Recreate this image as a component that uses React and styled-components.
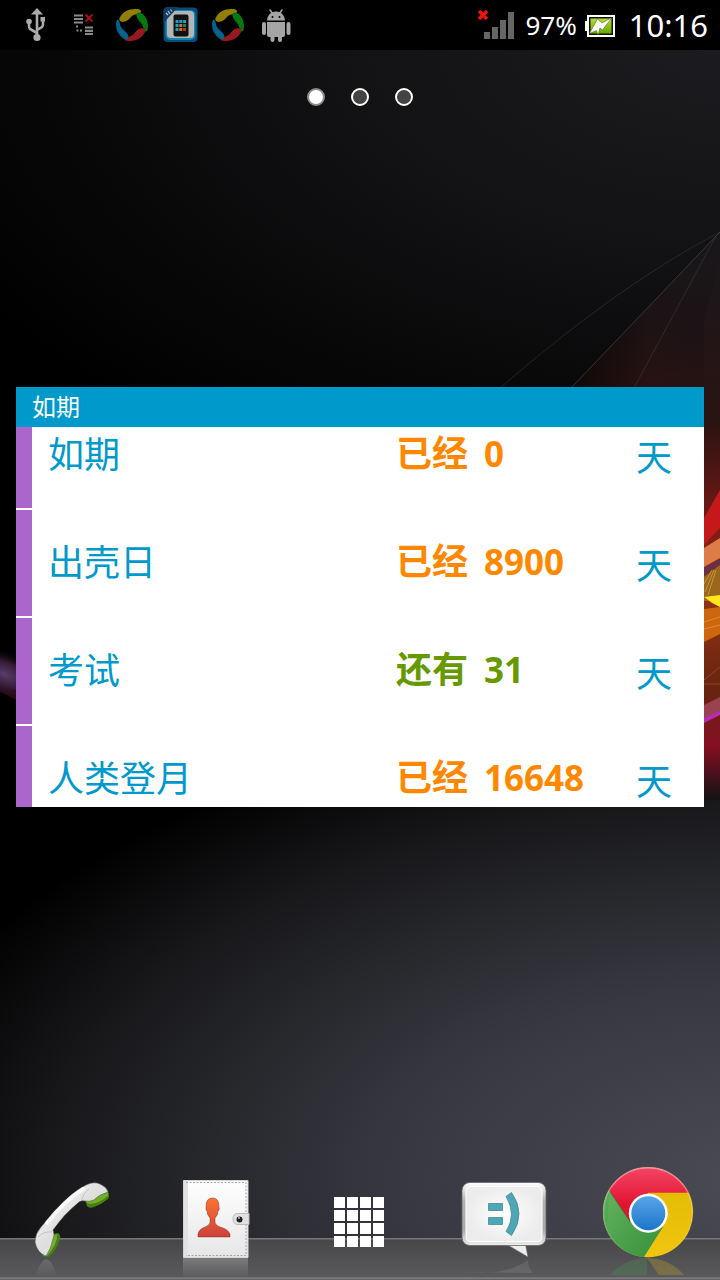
import React from "react";
import styled, { createGlobalStyle } from "styled-components";

const GlobalStyle = createGlobalStyle`
  *, *::before, *::after { box-sizing: border-box; }
  body {
    margin: 0;
    background: #000;
    font-family: "Noto Sans", "Noto Sans CJK SC", sans-serif;
  }
`;

const Screen = styled.div`
  position: relative;
  isolation: isolate;
  display: flex;
  flex-direction: column;
  min-height: 100vh;
  overflow: hidden;
`;

const Wallpaper = styled.svg`
  position: absolute;
  inset: 0;
  z-index: -1;
  width: 100%;
  height: 100%;
`;

const StatusBar = styled.header`
  display: flex;
  align-items: center;
  justify-content: space-between;
  height: 50px;
  padding: 0 12px 0 20px;
  background: #000;
  color: #fff;
`;

const Notifications = styled.div`
  display: flex;
  gap: 16px;
`;

const StatusIcon = styled.svg`
  display: block;
  width: ${({ $width }) => $width || 32}px;
  height: 40px;
  overflow: visible;
`;

const SystemStatus = styled.div`
  display: flex;
  align-items: center;
`;

const BatteryLevel = styled.span`
  padding: 0 8px 0 10px;
  font-size: 26px;
  line-height: 50px;
`;

const Clock = styled.time`
  padding-left: 14px;
  font-size: 31px;
  line-height: 50px;
`;

const Pager = styled.nav`
  display: flex;
  justify-content: center;
  gap: 26px;
  padding-top: 38px;
`;

const PageDot = styled.button`
  width: 18px;
  height: 18px;
  padding: 0;
  border: 2px solid ${({ $active }) => ($active ? "#8c8c8c" : "#fff")};
  border-radius: 50%;
  background: ${({ $active }) => ($active ? "#fff" : "#444")};
`;

const Widget = styled.section`
  margin: 281px 16px 40px;
`;

const WidgetTitle = styled.h1`
  margin: 0;
  padding: 0 16px;
  background: #0099cc;
  color: #fff;
  font-size: 24px;
  font-weight: 400;
  line-height: 40px;
`;

const EventList = styled.ul`
  display: flex;
  flex-direction: column;
  justify-content: center;
  gap: 2px;
  height: 380px;
  margin: 0;
  padding: 0;
  overflow: hidden;
  background: #fff;
  list-style: none;
`;

const EventRow = styled.li`
  display: grid;
  flex: none;
  grid-template-columns: 1fr 240px 36px;
  align-items: center;
  height: 106px;
  padding: 0 32px 0 16px;
  border-left: 16px solid #aa66cc;
  color: #0099cc;
  font-size: 36px;
  line-height: 52px;
`;

const EventName = styled.span`
  padding-bottom: 6px;
  font-family: "Noto Sans CJK SC", sans-serif;
`;

const Countdown = styled.span`
  display: flex;
  gap: 16px;
  padding-bottom: 2px;
  color: ${({ $upcoming }) => ($upcoming ? "#669900" : "#ff8800")};
  font-weight: 700;
`;

const Days = styled.span`
  font-size: 35px;
`;

const Unit = styled(EventName)`
  padding-bottom: 0;
`;

const Dock = styled.nav`
  display: grid;
  grid-template-columns: repeat(5, 1fr);
  margin-top: auto;
  background: linear-gradient(
    transparent 78px,
    #77777b 78px,
    #77777b 79px,
    #47474a 80px,
    #5a5a5c 117px,
    #88888a 118px,
    #555557 120px
  );
`;

const DockButton = styled.button`
  display: flex;
  justify-content: center;
  padding: 0;
  border: 0;
  background: none;
`;

const DockIcon = styled.svg`
  display: block;
  width: 144px;
  height: 120px;
`;

const UsbIcon = () => (
  <StatusIcon viewBox="0 0 32 40" aria-label="USB">
    <g fill="none" stroke="#aaa" strokeWidth="2.6">
      <path d="M17 8V34M17 28l-7-4q-1-1-1-3v-5M17 25l5-3q1-1 1-3v-4" />
    </g>
    <g fill="#aaa">
      <path d="M17 3l6 6.500H11z" />
      <circle cx="17" cy="32.500" r="3.600" />
      <circle cx="9" cy="16.500" r="2.800" />
      <path d="M20.500 12h4.500v4.500h-4.500z" />
    </g>
  </StatusIcon>
);

const DataIcon = () => (
  <StatusIcon viewBox="0 0 32 40" aria-label="No data">
    <path d="M6 10.500h9M6 14h9M6 17.500h9M17 22.500h8M17 25.800h8M17 29h8" stroke="#8a8a8a" strokeWidth="2.200" />
    <path d="M8 20.500h2v2H8zM8.500 24.500h2v2h-2zM12 24.500h2v2h-2z" fill="#8a8a8a" />
    <path d="M17.500 9.500l7 7M24.500 9.500l-7 7" stroke="#ad1010" strokeWidth="1.800" />
  </StatusIcon>
);

const SwirlIcon = () => (
  <StatusIcon viewBox="0 0 32 40" aria-label="Sync">
    <path fill="#927f00" d="M3.500 13C7 6 14 3 23 4.300c2 .8 2.600 2 1.500 3.500-2 2-4.500 1-7 2.200-3 1.500-4.500 5.500-8.500 6.500-3 .8-6.500.2-5.500-3.500z" />
    <path fill="#04790d" d="M20.500 11c-.8-3.500 2.500-4.500 5.500-2.500 5 4 7 10 5.500 16.500-.6 2.400-2.600 1.600-3.500-.5-1-2.200-.8-4-3-6.500-1.800-2.200-3.900-4-4.500-7z" />
    <path fill="#96191d" d="M29 27c-3.500 7-10.500 10-18.500 8.700-2.500-.6-2.700-2.200-.8-3 3-1.300 5-.7 7.500-3.200 2.200-2.200 3.800-5.300 7.300-6 3.500-.6 6.300.4 4.500 3.500z" />
    <path fill="#05608c" d="M.5 15.500c1-1.500 2.500-.5 3 1.500.7 2.700.4 4 2.700 6.500 2.500 2.700 6.300 5 6.300 8.500-.2 3-3.300 3.200-6 .8C1 28 -1 22 .5 15.500z" />
  </StatusIcon>
);

const PhoneAppIcon = () => (
  <StatusIcon viewBox="0 0 32 40" aria-label="Phone app">
    <rect x="-.5" y="2.500" width="34" height="34.500" rx="4" fill="#064c76" />
    <rect x="1.500" y="5" width="30" height="30" rx="5" fill="#1387ae" />
    <rect x="3" y="6" width="27" height="27" rx="4" fill="#b4b4b4" />
    <path d="M-.5 18V6q0-4 4-4H14z" fill="#0d3f65" />
    <path d="M2 8l2 2M4 6l2 3M6.500 4.500l1.500 2" stroke="#bcc7ce" strokeWidth="1.200" />
    <rect x="9.500" y="9.500" width="15" height="22" rx="2" fill="#111" />
    <path fill="#1ba0cc" d="M11.500 15h3v3h-3zM15.300 15h3v3h-3zM19.100 15h3v3h-3zM11.500 19h3v3h-3zM11.500 23h3v3h-3z" />
    <path fill="#c8780f" d="M15.300 19h3v3h-3zM15.300 23h3v3h-3z" />
    <path fill="#168a45" d="M19.100 19h3v3h-3z" />
    <path fill="#b8331a" d="M19.100 23h3v3h-3z" />
  </StatusIcon>
);

const AndroidIcon = () => (
  <StatusIcon viewBox="0 0 32 40" aria-label="Android">
    <g fill="#a5a5a5">
      <path d="M7 15.500C7.500 10 11 6.500 16 6.500s8.500 3.500 9 9zM7 17h18v13q0 2-2 2H9q-2 0-2-2z" />
      <rect x="2" y="17" width="4" height="13" rx="2" />
      <rect x="26.500" y="17" width="4" height="13" rx="2" />
      <rect x="10.500" y="28" width="4" height="9" rx="2" />
      <rect x="18" y="28" width="4" height="9" rx="2" />
    </g>
    <path d="M10 5l3 4M22 5l-3 4" stroke="#a5a5a5" strokeWidth="1.500" strokeLinecap="round" />
    <circle cx="12.500" cy="12" r="1" />
    <circle cx="19.500" cy="12" r="1" />
  </StatusIcon>
);

const SignalIcon = () => (
  <StatusIcon viewBox="0 0 38 40" $width={38} aria-label="No signal">
    <path d="M7 27h6v7H7zM15 22h6v12h-6zM23 15h6v19h-6zM31 7h6v27h-6z" fill="#666" />
    <path d="M2 6l8 8M10 6l-8 8" stroke="#f01111" strokeWidth="3.500" />
  </StatusIcon>
);

const BatteryIcon = () => (
  <StatusIcon viewBox="0 0 30 40" $width={30} aria-label="Charging">
    <defs>
      <linearGradient id="charge" x2="0" y2="1">
        <stop stopColor="#b5dd32" />
        <stop offset="1" stopColor="#69a800" />
      </linearGradient>
    </defs>
    <path d="M0 16h3v10H0z" fill="#fff" />
    <rect x="3" y="11" width="26" height="20" fill="#111" stroke="#fff" strokeWidth="2" />
    <path d="M5.500 13.500h21v15h-21z" fill="url(#charge)" />
    <path d="M27 12.500L17.500 25l-2.500-2-2 7-1.500-4.500L4.500 28.500 12.500 14l4.500 4z" fill="#fff" stroke="#3c5c0c" strokeWidth=".5" />
  </StatusIcon>
);

const Call = () => (
  <DockIcon viewBox="0 0 144 120" aria-hidden="true">
    <defs>
      <linearGradient id="handset" x1="0" y1="0" x2="1" y2="1">
        <stop stopColor="#fff" />
        <stop offset=".5" stopColor="#dedede" />
        <stop offset="1" stopColor="#fafafa" />
      </linearGradient>
      <linearGradient id="callShine" x2="0" y2="1">
        <stop stopColor="#aaa" stopOpacity=".3" />
        <stop offset="1" stopColor="#aaa" stopOpacity="0" />
      </linearGradient>
    </defs>
    <path d="M46 99q8 2 10 18H36q2-14 10-18z" fill="url(#callShine)" />
    <path d="M85 40l2 6q2 3 7 1 8-3 14-8 2-3 0-8zM53 74l5-1q3 2 2 6-3 10-10 17-3 2-7 0z" fill="#477f12" />
    <path d="M86 41l22-9 0 4q-8 7-18 8-3 0-4-3zM53 76l4-2q1 10-10 22l-4 0z" fill="#6fae25" />
    <path d="M35 82q0-8 6-15 12-15 27-29 10-9 18-13 8-4 14-1 7 3 8 8-10 3-14 8-5 2-9 1-3-1-6 1-15 12-26 28 2 5 0 9-2 10-7 17-9-3-11-14z" fill="url(#handset)" stroke="#555" strokeWidth=".6" />
    <path d="M83 29Q65 40 47 63" fill="none" stroke="#fff" strokeWidth="4" strokeLinecap="round" opacity=".85" />
    <path d="M82 40q2-8 7-11M52 72q-8-1-14 5" fill="none" stroke="#c4c4c4" />
  </DockIcon>
);

const Contacts = () => (
  <DockIcon viewBox="0 0 144 120" aria-hidden="true">
    <defs>
      <linearGradient id="cover" x2="0" y2="1">
        <stop stopColor="#fff" />
        <stop offset="1" stopColor="#e6e6e7" />
      </linearGradient>
      <linearGradient id="person" x2="0" y2="1">
        <stop stopColor="#fb7430" />
        <stop offset="1" stopColor="#ce403a" />
      </linearGradient>
      <linearGradient id="coverShine" x2="0" y2="1">
        <stop stopColor="#bbb" stopOpacity=".4" />
        <stop offset="1" stopColor="#bbb" stopOpacity="0" />
      </linearGradient>
    </defs>
    <path d="M39 98h65v20H39z" fill="url(#coverShine)" />
    <path d="M39.500 20.500h64.500v77h-64.500z" fill="url(#cover)" stroke="#d4d4d6" />
    <path d="M40 21h4v76h-4z" fill="#e2e2e4" />
    <path d="M42 22.500h60v73H42" fill="none" stroke="#a5a5a5" strokeDasharray="2 1.500" />
    <path d="M54 77v-3q1-5 7-7 5-2 5-5v-4q-3-3-3-7-1.500-1-1-4-.3-9 6.500-9t6.500 9q1 3-1 4 0 4-3 7v4q0 3 5 5 8 2 10 7v3z" fill="url(#person)" stroke="#6d1e12" strokeOpacity=".5" strokeWidth=".8" />
    <path d="M105 53.500H94q-5 0-5 5.500t5 5.500h11z" fill="#e1e1e1" stroke="#bbb" />
    <circle cx="95.500" cy="59.500" r="3" fill="#222" />
    <circle cx="95" cy="58" r="1" fill="#bbb" />
  </DockIcon>
);

const Apps = () => (
  <DockIcon viewBox="0 0 144 120" aria-hidden="true">
    {[0, 1, 2, 3].map((row) =>
      [0, 1, 2, 3].map((col) => (
        <rect key={`${row}${col}`} x={46 + col * 13} y={37 + row * 13} width="11" height="11" fill="#fff" />
      ))
    )}
  </DockIcon>
);

const Messaging = () => (
  <DockIcon viewBox="0 0 144 120" aria-hidden="true">
    <defs>
      <linearGradient id="bubbleEdge" x2="0" y2="1">
        <stop stopColor="#fff" />
        <stop offset=".3" stopColor="#b2b2b2" />
        <stop offset=".75" stopColor="#aaa" />
        <stop offset="1" stopColor="#eee" />
      </linearGradient>
      <radialGradient id="bubble">
        <stop stopColor="#fff" />
        <stop offset="1" stopColor="#ececec" />
      </radialGradient>
    </defs>
    <path d="M34 112q40 4 62-12 0 8 5 13z" fill="#aaa" opacity=".18" />
    <path d="M74 84l22 13-3-15z" fill="#eee" stroke="#666" strokeWidth=".6" />
    <rect x="30" y="22.500" width="84" height="63" rx="8" fill="url(#bubbleEdge)" stroke="#66666a" strokeWidth=".8" />
    <rect x="34" y="26.500" width="76" height="55" rx="4" fill="url(#bubble)" stroke="#fff" />
    <path d="M56.500 43.500h14v7h-14zM56.500 57.500h14v7h-14z" fill="#4fa6b7" stroke="#37818f" strokeWidth=".7" />
    <path d="M74 36.500l5.500-4q15 21 0 43l-5.500-4q11-17 0-35z" fill="#4fa6b7" stroke="#37818f" strokeWidth=".7" />
  </DockIcon>
);

const Chrome = () => (
  <DockIcon viewBox="0 0 144 120" aria-hidden="true">
    <defs>
      <linearGradient id="chromeRed" x2="0" y2="1">
        <stop stopColor="#f6486a" />
        <stop offset=".7" stopColor="#e01430" />
      </linearGradient>
      <linearGradient id="chromeGreen" x2="1" y2="1">
        <stop stopColor="#63b260" />
        <stop offset="1" stopColor="#359038" />
      </linearGradient>
      <linearGradient id="chromeYellow" x2="0" y2="1">
        <stop stopColor="#dfb800" />
        <stop offset="1" stopColor="#f2c711" />
      </linearGradient>
      <linearGradient id="chromeBlue" x2="0" y2="1">
        <stop stopColor="#58a5e8" />
        <stop offset="1" stopColor="#1c75c9" />
      </linearGradient>
      <linearGradient id="chromeShine" x2="0" y2="1">
        <stop stopColor="#fff" stopOpacity=".4" />
        <stop offset="1" stopColor="#fff" stopOpacity="0" />
      </linearGradient>
      <clipPath id="chromeDisc">
        <circle cx="72" cy="52.300" r="45" />
      </clipPath>
    </defs>
    <path d="M34 115q16-17 37-17v17z" fill="#4d8b50" opacity=".35" />
    <path d="M71 98q22 0 37 17H83z" fill="#b69c2b" opacity=".35" />
    <g clipPath="url(#chromeDisc)">
      <path d="M20 0h110v110H20z" fill="url(#chromeYellow)" />
      <path d="M20 9l13.300 21.700L67 98v12H20z" fill="url(#chromeGreen)" />
      <path d="M33.300 30.700L53.500 61 87 67 67 98.500 30 90z" fill="url(#chromeGreen)" />
      <path d="M20 9V5h100v27.700H72L54 62 33.300 30.700z" fill="url(#chromeRed)" />
      <path d="M33.300 30.700L54 61.500" stroke="#2c7433" strokeWidth=".7" />
    </g>
    <circle cx="72" cy="52.300" r="44.500" fill="none" stroke="url(#chromeShine)" strokeWidth="1.500" />
    <circle cx="72.300" cy="53.300" r="19.500" fill="#fff" />
    <circle cx="72.300" cy="53.300" r="17" fill="url(#chromeBlue)" />
  </DockIcon>
);

const Backdrop = () => (
  <Wallpaper viewBox="0 0 720 1280" preserveAspectRatio="none" aria-hidden="true">
    <defs>
      <radialGradient id="upper" r="1" cx="0" cy="0" gradientUnits="userSpaceOnUse" gradientTransform="translate(720 40) scale(880 500)">
        <stop stopColor="#1c1c20" />
        <stop offset=".4" stopColor="#131315" />
        <stop offset=".8" stopColor="#060607" />
        <stop offset="1" stopColor="#000" />
      </radialGradient>
      <radialGradient id="lower" r="1" cx="0" cy="0" gradientUnits="userSpaceOnUse" gradientTransform="translate(760 1180) scale(900 480)">
        <stop stopColor="#4b4b56" />
        <stop offset=".4" stopColor="#383842" />
        <stop offset=".6" stopColor="#28292d" />
        <stop offset=".8" stopColor="#17171a" />
        <stop offset="1" stopColor="#000" />
      </radialGradient>
      <linearGradient id="ember" x2="0" y2="1">
        <stop stopColor="#1a171b" />
        <stop offset=".3" stopColor="#2a1312" />
        <stop offset=".5" stopColor="#7a1a14" />
        <stop offset=".6" stopColor="#983515" />
        <stop offset=".8" stopColor="#652410" />
        <stop offset=".9" stopColor="#850f22" />
        <stop offset="1" stopColor="#121214" />
      </linearGradient>
      <linearGradient id="rays" x1="720" y1="235" x2="690" y2="400" gradientUnits="userSpaceOnUse">
        <stop stopColor="#19171b" />
        <stop offset=".6" stopColor="#1c1315" />
        <stop offset="1" stopColor="#2a1211" />
      </linearGradient>
      <linearGradient id="raysFade" x1="570" x2="650" gradientUnits="userSpaceOnUse">
        <stop stopColor="#070606" stopOpacity=".8" />
        <stop offset="1" stopColor="#070606" stopOpacity="0" />
      </linearGradient>
      <radialGradient id="glow">
        <stop stopColor="#5a3a6c" />
        <stop offset=".5" stopColor="#331a33" />
        <stop offset="1" stopColor="#000" stopOpacity="0" />
      </radialGradient>
    </defs>
    <path d="M0 0h720v720H0z" fill="url(#upper)" />
    <path d="M0 700h720v580H0z" fill="url(#lower)" />
    <path d="M720 232L572 387v120h148z" fill="url(#rays)" />
    <path d="M720 232L572 387v120h148z" fill="url(#raysFade)" />
    <path d="M720 232Q620 284 500 388M716 236L634 388" fill="none" stroke="#77777d" strokeOpacity=".22" />
    <path d="M720 232L571 388" stroke="#77777d" strokeOpacity=".35" />
    <path d="M704 320l16-60v540h-16z" fill="url(#ember)" />
    <path d="M704 518l16-28v38l-16 17z" fill="#c5181b" />
    <path d="M704 548l16-10v20l-16 9z" fill="#dc7d48" />
    <path d="M704 568l16-9v5l-16 12z" fill="#65304c" />
    <path d="M704 577l16-12v36h-16z" fill="#9a671c" />
    <path d="M705 592l9-22M708 595l8-25M704 584l8-14" stroke="#c39834" strokeWidth="1" />
    <path d="M704 597l16-2v12q-9-4-16-10z" fill="#ffe51b" />
    <path d="M704 609l16-2v27l-16 8z" fill="#cc670f" />
    <path d="M704 622l16-5M704 629l16-4" stroke="#e28a27" />
    <path d="M704 680l16-13M704 684h16" stroke="#8a4525" />
    <path d="M704 705l16-8v15l-16 8z" fill="#9a4252" />
    <path d="M704 718l16-7v4l-16 8z" fill="#b52bb5" />
    <path d="M-5 683l30 14-2 6-28-14z" fill="#4a0d12" opacity=".8" />
    <ellipse cx="4" cy="674" rx="50" ry="24" fill="url(#glow)" transform="rotate(22 4 674)" />
  </Wallpaper>
);

const events = [
  { name: "如期", status: "已经", days: 0 },
  { name: "出壳日", status: "已经", days: 8900 },
  { name: "考试", status: "还有", days: 31, upcoming: true },
  { name: "人类登月", status: "已经", days: 16648 },
];

const dockItems = [
  { label: "Phone", Icon: Call },
  { label: "Contacts", Icon: Contacts },
  { label: "Apps", Icon: Apps },
  { label: "Messaging", Icon: Messaging },
  { label: "Chrome", Icon: Chrome },
];

export default function App() {
  return (
    <Screen>
      <GlobalStyle />
      <Backdrop />
      <StatusBar>
        <Notifications>
          <UsbIcon />
          <DataIcon />
          <SwirlIcon />
          <PhoneAppIcon />
          <SwirlIcon />
          <AndroidIcon />
        </Notifications>
        <SystemStatus>
          <SignalIcon />
          <BatteryLevel>97%</BatteryLevel>
          <BatteryIcon />
          <Clock>10:16</Clock>
        </SystemStatus>
      </StatusBar>
      <Pager aria-label="Home screens">
        {[1, 2, 3].map((page) => (
          <PageDot key={page} type="button" $active={page === 1} aria-label={`Page ${page}`} />
        ))}
      </Pager>
      <Widget>
        <WidgetTitle>如期</WidgetTitle>
        <EventList>
          {events.map(({ name, status, days, upcoming }) => (
            <EventRow key={name}>
              <EventName>{name}</EventName>
              <Countdown $upcoming={upcoming}>
                <span>{status}</span>
                <Days>{days}</Days>
              </Countdown>
              <Unit>天</Unit>
            </EventRow>
          ))}
        </EventList>
      </Widget>
      <Dock aria-label="Dock">
        {dockItems.map(({ label, Icon }) => (
          <DockButton key={label} type="button" aria-label={label}>
            <Icon />
          </DockButton>
        ))}
      </Dock>
    </Screen>
  );
}
